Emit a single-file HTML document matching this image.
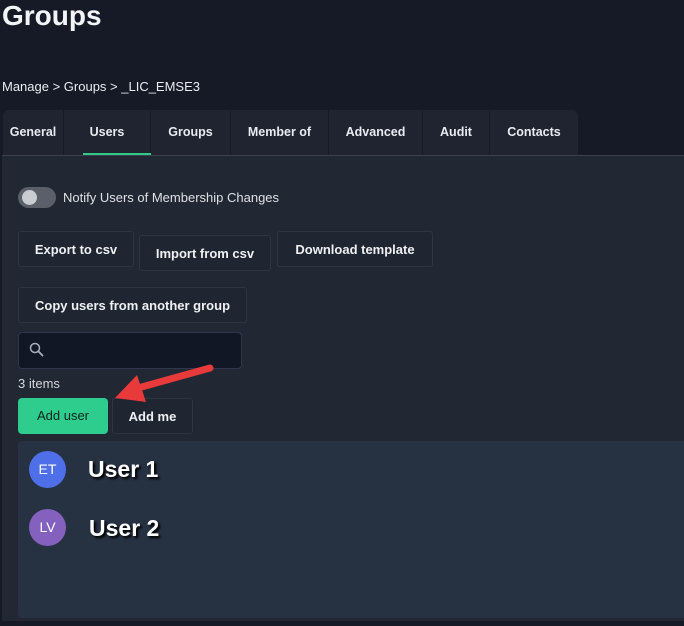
<!DOCTYPE html>
<html><head><style>
*{margin:0;padding:0;box-sizing:border-box}
body{width:684px;height:626px;background:#151a26;font-family:"Liberation Sans",sans-serif;color:#e8ebf0;position:relative;overflow:hidden}
.a{position:absolute}
h1{position:absolute;left:2px;top:0px;font-size:28px;font-weight:bold;color:#f2f4f7}
.tabs{left:3px;top:110px;width:575px;height:46px;background:#1f2430;border-radius:6px 6px 0 0}
.tab{position:absolute;top:0;height:46px;line-height:44px;font-size:12.5px;font-weight:bold;color:#e8ebf0;text-align:center;border-right:1px solid #171b25}
.panel{left:2px;top:155px;width:682px;height:466px;background:#212733;border-top:1px solid #3a404c}
.btn{position:absolute;border:1px solid #2e3542;background:#202631;border-radius:3px;font-size:13px;font-weight:bold;color:#eef0f3;text-align:center}
</style></head><body>
<h1>Groups</h1>
<div class="a" style="left:2px;top:79px;font-size:13px;color:#e8ebf0">Manage &gt; Groups &gt; _LIC_EMSE3</div>
<div class="a tabs">
<div class="tab" style="left:0;width:61px">General</div>
<div class="tab" style="left:61px;width:87px">Users</div>
<div class="tab" style="left:148px;width:80px">Groups</div>
<div class="tab" style="left:228px;width:98px">Member of</div>
<div class="tab" style="left:326px;width:94px">Advanced</div>
<div class="tab" style="left:420px;width:67px">Audit</div>
<div class="tab" style="left:487px;width:88px;border:none">Contacts</div>
</div>
<div class="a panel"></div>
<div class="a" style="left:83px;top:153px;width:68px;height:2px;background:#2fc98a"></div>
<div class="a" style="left:18px;top:187px;width:38px;height:21px;border-radius:11px;background:#5a5f69"></div>
<div class="a" style="left:22px;top:190px;width:15px;height:15px;border-radius:50%;background:#c9ccd2"></div>
<div class="a" style="left:63px;top:190px;font-size:13px;color:#dde0e5">Notify Users of Membership Changes</div>
<div class="btn" style="left:18px;top:231px;width:116px;height:36px;line-height:36px">Export to csv</div>
<div class="btn" style="left:139px;top:235px;width:132px;height:36px;line-height:36px">Import from csv</div>
<div class="btn" style="left:277px;top:231px;width:156px;height:36px;line-height:36px">Download template</div>
<div class="btn" style="left:18px;top:287px;width:229px;height:36px;line-height:36px">Copy users from another group</div>
<div class="a" style="left:18px;top:332px;width:224px;height:37px;background:#121725;border:1px solid #30374a;border-radius:4px"></div>
<svg class="a" style="left:28px;top:341px" width="18" height="18" viewBox="0 0 18 18"><circle cx="7" cy="7" r="4.5" stroke="#aab0bb" stroke-width="1.5" fill="none"/><path d="M10.3 10.3L15 15" stroke="#aab0bb" stroke-width="1.8"/></svg>
<div class="a" style="left:18px;top:376px;font-size:13px;color:#d5d8de">3 items</div>
<div class="a" style="left:18px;top:398px;width:90px;height:36px;background:#2ecc8d;border-radius:4px;color:#10241b;font-size:13px;line-height:36px;text-align:center">Add user</div>
<div class="btn" style="left:112px;top:398px;width:81px;height:36px;line-height:36px">Add me</div>
<svg class="a" style="left:110px;top:360px" width="110" height="45"><path d="M100 8L28 28" stroke="#e83a3a" stroke-width="7" stroke-linecap="round"/><path d="M5 38L27 15L36 42Z" fill="#e83a3a"/></svg>
<div class="a" style="left:18px;top:441px;width:666px;height:177px;background:#263142;border-radius:4px 0 0 4px"></div>
<div class="a" style="left:29px;top:451px;width:37px;height:37px;border-radius:50%;background:#4f6fe8;color:#fff;font-size:14px;line-height:37px;text-align:center">ET</div>
<div class="a" style="left:29px;top:509px;width:37px;height:37px;border-radius:50%;background:#8461bf;color:#fff;font-size:14px;line-height:37px;text-align:center">LV</div>
<div class="a" style="left:88px;top:456px;font-size:23px;font-weight:bold;color:#fff;text-shadow:2px 2px 2px #000">User 1</div>
<div class="a" style="left:89px;top:515px;font-size:23px;font-weight:bold;color:#fff;text-shadow:2px 2px 2px #000">User 2</div>
</body></html>
